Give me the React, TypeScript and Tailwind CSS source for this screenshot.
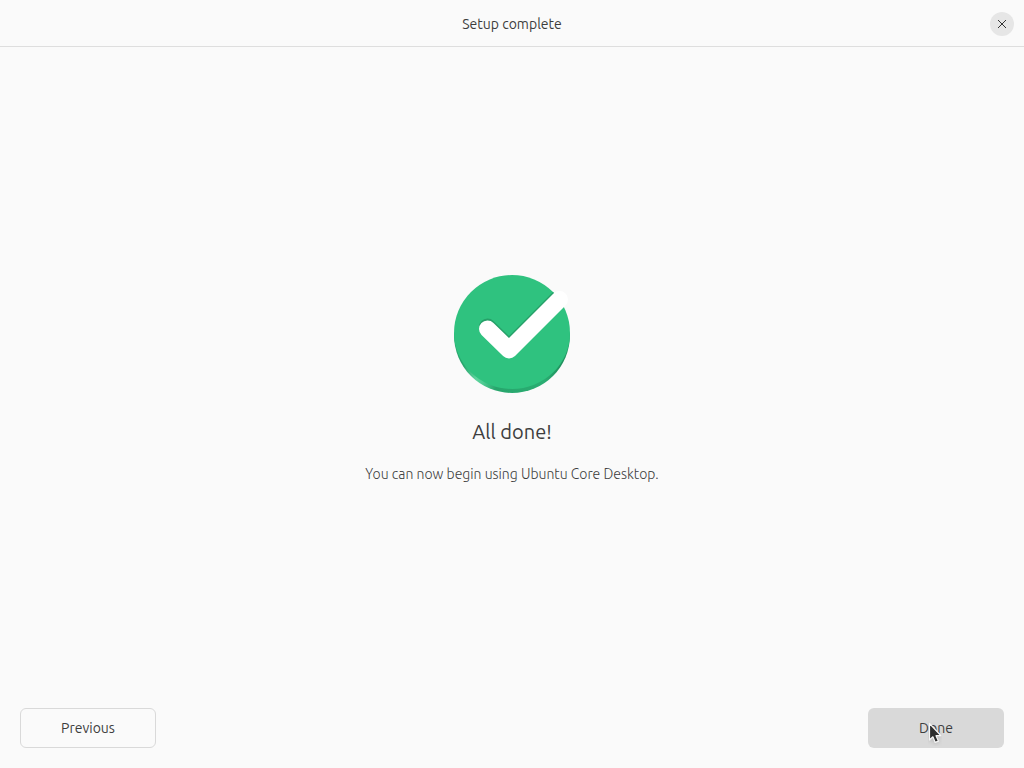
function CheckBadge() {
  return (
    <svg width="120" height="120" viewBox="0 0 120 120" aria-hidden="true">
      <defs>
        <linearGradient id="rim" x1="2" y1="0" x2="118" y2="0" gradientUnits="userSpaceOnUse">
          <stop offset="0" stopColor="#27a56c" />
          <stop offset="0.08" stopColor="#27a56c" />
          <stop offset="0.19" stopColor="#5dd39d" />
          <stop offset="0.25" stopColor="#4ecb92" />
          <stop offset="0.36" stopColor="#27a56c" />
          <stop offset="0.78" stopColor="#2aad72" />
          <stop offset="0.93" stopColor="#1f8f5c" />
          <stop offset="1" stopColor="#27a56c" />
        </linearGradient>
        <clipPath id="face">
          <circle cx="60" cy="59" r="58" />
        </clipPath>
      </defs>
      <path d="M2 59v2a58 58 0 0 0 116 0v-2z" fill="url(#rim)" />
      <path d="M2 59a58 58 0 0 1 116 0a58 56 0 0 1-116 0z" fill="#2fc27f" />
      <g fill="none" strokeWidth="17" strokeLinecap="round" strokeLinejoin="round">
        <path d="M35.5 53L57 74L107.5 23.5" stroke="#27a069" clipPath="url(#face)" />
        <path d="M35.5 55L57 76L107.5 25.5" stroke="#ffffff" />
      </g>
    </svg>
  );
}

function Pointer() {
  return (
    <svg
      className="pointer-events-none absolute top-3.5 left-15"
      width="14"
      height="24"
      viewBox="0 0 14 24"
      aria-hidden="true"
    >
      <path
        d="M1.5 1.5v16.5l3.4-3.2 2.3 5.6 3.2-1.3-2.4-5.4h4.8z"
        fill="#2d2d2d"
        stroke="#f5f5f5"
        strokeWidth="1.2"
        strokeLinejoin="round"
        className="drop-shadow-sm"
      />
    </svg>
  );
}

export default function App() {
  return (
    <div className="flex min-h-screen flex-col bg-[#fafafa] font-['Ubuntu','Noto_Sans',sans-serif] text-sm text-[#3d3d3d]">
      <header className="grid h-[47px] grid-cols-[1fr_auto_1fr] items-center border-b border-[#dedede] px-2.5 pt-0.5">
        <h1 className="col-start-2">Setup complete</h1>
        <button
          type="button"
          aria-label="Close"
          className="flex size-6 items-center justify-center justify-self-end rounded-full bg-[#e6e6e6]"
        >
          <svg width="10" height="10" viewBox="0 0 10 10" aria-hidden="true">
            <path d="M1 1l8 8M9 1L1 9" stroke="#333333" strokeWidth="1" fill="none" />
          </svg>
        </button>
      </header>

      <main className="flex flex-1 flex-col items-center justify-center pt-6 text-center">
        <CheckBadge />
        <h2 className="mt-5 text-xl leading-9">All done!</h2>
        <p className="mt-3 leading-6 font-light">You can now begin using Ubuntu Core Desktop.</p>
      </main>

      <footer className="flex justify-between p-5">
        <button type="button" className="h-10 w-34 rounded-md border border-[#d9d9d9]">
          Previous
        </button>
        <button type="button" className="relative h-10 w-34 rounded-md bg-[#d9d9d9]">
          Done
          <Pointer />
        </button>
      </footer>
    </div>
  );
}
